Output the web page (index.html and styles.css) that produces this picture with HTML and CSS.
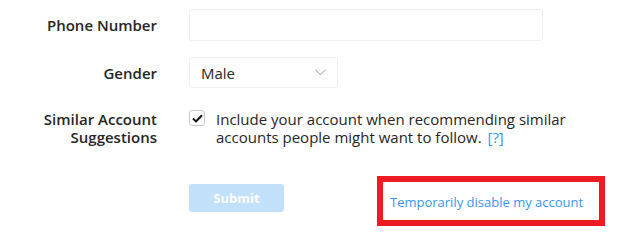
FILE: index.html
```html
<!DOCTYPE html>
<html>
<head>
<meta charset="utf-8">
<link rel="stylesheet" href="styles.css">
</head>
<body>
<form class="form">
  <div class="label label-center">Phone Number</div>
  <div class="field"><input class="input" type="text"></div>

  <div class="label label-center label-gender">Gender</div>
  <div class="field field-gender">
    <div class="select">
      <span class="select-value">Male</span>
      <svg class="chevron" width="11" height="7" viewBox="0 0 11 7"><path d="M0.5 0.8 L5.5 5.8 L10.5 0.8" fill="none" stroke="#999" stroke-width="1"/></svg>
    </div>
  </div>

  <div class="label label-top">Similar Account<br>Suggestions</div>
  <div class="field field-check">
    <span class="checkbox">
      <svg width="11" height="9" viewBox="0 0 11 9"><path d="M1 4.6 L4 7.4 L10 1.2" fill="none" stroke="#111" stroke-width="2"/></svg>
    </span>
    <span class="check-text">Include your account when recommending similar accounts people might want to follow. <a class="help">[?]</a></span>
  </div>

  <div class="label"></div>
  <div class="field field-submit">
    <button class="submit" type="button">Submit</button>
    <span class="highlight"><a class="link">Temporarily disable my account</a></span>
  </div>
</form>
</body>
</html>
```

FILE: styles.css
```css
html, body {
  margin: 0;
  padding: 0;
  background: #fff;
}
body {
  font-family: "Open Sans", "Noto Sans", sans-serif;
  font-size: 15px;
  color: #262626;
}
.form {
  display: grid;
  grid-template-columns: 157px 1fr;
  column-gap: 32px;
  padding-top: 9px;
}
.label {
  font-weight: 600;
  text-align: right;
  line-height: 18px;
}
.label-center {
  align-self: center;
}
.label-gender {
  margin-top: 16px;
}
.label-top {
  margin-top: 22px;
}
.input {
  box-sizing: border-box;
  width: 354px;
  height: 32px;
  border: 1px solid #efefef;
  border-radius: 3px;
  margin: 0;
  display: block;
  background: #fff;
}
.field-gender {
  margin-top: 16px;
}
.select {
  box-sizing: border-box;
  width: 149px;
  height: 31px;
  border: 1px solid #efefef;
  border-radius: 3px;
  display: flex;
  align-items: center;
  justify-content: space-between;
  padding: 0 11px 0 11px;
}
.select-value {
  font-size: 15px;
  line-height: 18px;
}
.chevron {
  display: block;
}
.field-check {
  margin-top: 22px;
  display: flex;
  align-items: flex-start;
  gap: 11px;
  line-height: 18px;
}
.checkbox {
  flex: none;
  box-sizing: border-box;
  width: 16px;
  height: 16px;
  margin-top: 0;
  border: 1px solid #c7c7c7;
  border-radius: 3px;
  display: flex;
  align-items: center;
  justify-content: center;
  background: #fff;
}
.checkbox svg {
  display: block;
}
.check-text {
  width: 360px;
}
.help {
  color: #3897f0;
  margin-left: 2px;
}
.field-submit {
  margin-top: 30px;
  display: flex;
  align-items: flex-start;
}
.submit {
  flex: none;
  margin: 8px 0 0 0;
  width: 95px;
  height: 28px;
  border: 0;
  border-radius: 3px;
  background: #c3e0fb;
  color: #fff;
  font-family: inherit;
  font-weight: 700;
  font-size: 13px;
  padding: 0;
}
.highlight {
  flex: none;
  margin-left: 93px;
  box-sizing: border-box;
  width: 228px;
  height: 50px;
  border: 6px solid #ed1c24;
  display: flex;
  align-items: center;
  padding-left: 7px;
  white-space: nowrap;
}
.link {
  color: #3897f0;
  font-size: 13px;
  margin-top: 1px;
}
```
